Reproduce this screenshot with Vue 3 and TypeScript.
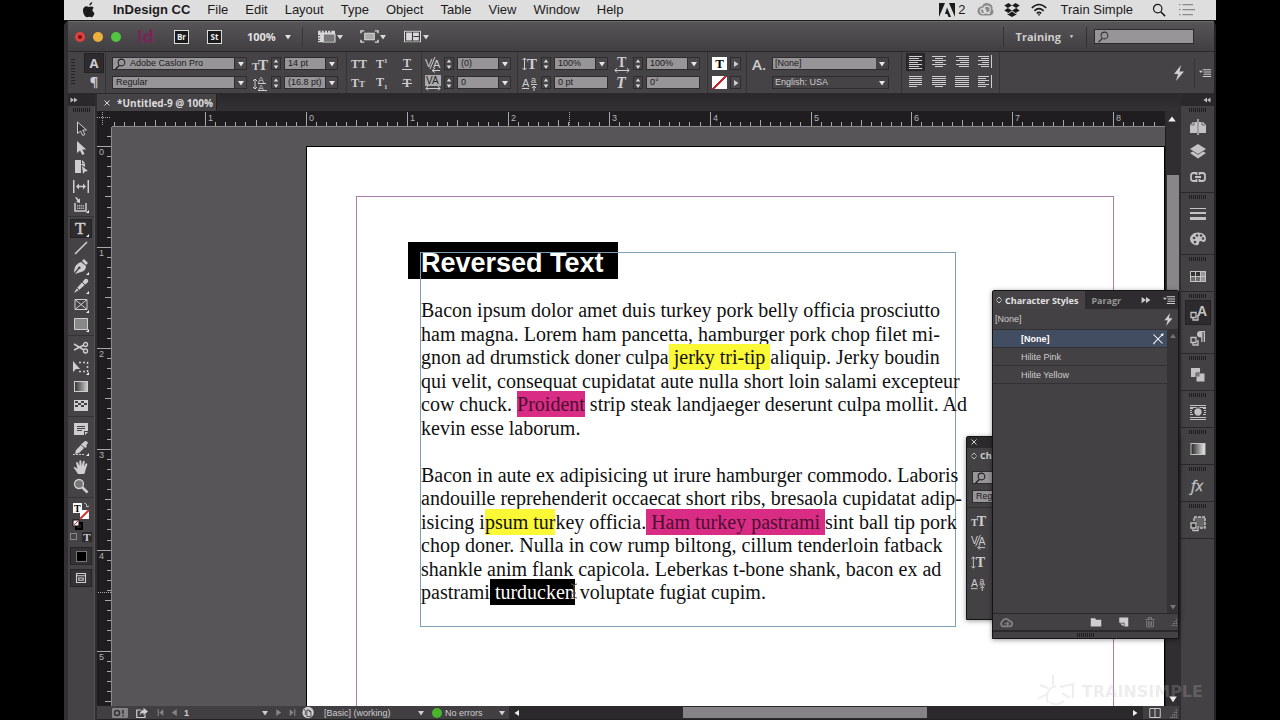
<script setup lang="ts">
import { ref } from 'vue'

interface Metric { icon: string; label: string; value: string; arrow: boolean }
interface Tick { pos: number; size: number; label: string }
interface Run { text: string; mark?: string }

const menus = ['File', 'Edit', 'Layout', 'Type', 'Object', 'Table', 'View', 'Window', 'Help']

const sizeMetrics: Metric[] = [
  { icon: 'fontSize', label: 'Font size', value: '14 pt', arrow: true },
  { icon: 'leading', label: 'Leading', value: '(16.8 pt)', arrow: true },
]
const kernMetrics: Metric[] = [
  { icon: 'kerning', label: 'Kerning', value: '(0)', arrow: true },
  { icon: 'tracking', label: 'Tracking', value: '0', arrow: true },
]
const vertMetrics: Metric[] = [
  { icon: 'vscale', label: 'Vertical scale', value: '100%', arrow: true },
  { icon: 'baseline', label: 'Baseline shift', value: '0 pt', arrow: false },
]
const horzMetrics: Metric[] = [
  { icon: 'hscale', label: 'Horizontal scale', value: '100%', arrow: true },
  { icon: 'skew', label: 'Skew', value: '0°', arrow: false },
]
const metricGroups = { size: sizeMetrics, kern: kernMetrics, vert: vertMetrics, horz: horzMetrics }

const caps = ['allCaps', 'superscript', 'underline', 'smallCaps', 'subscript', 'strike']
const aligns = ['alignLeft', 'alignCenter', 'alignRight', 'alignSpine', 'justLeft', 'justCenter', 'justAll', 'awaySpine']

const toolGroups = [
  ['select', 'direct', 'page', 'gap', 'collect'],
  ['type', 'line', 'pen', 'pencil', 'frame', 'rect'],
  ['scissors', 'transform', 'gradient', 'feather'],
  ['note', 'eyedropper', 'hand', 'zoom'],
]
const activeTool = ref('type')

const dockGroups = [
  ['pages', 'layers', 'links'],
  ['stroke', 'palette'],
  ['swatches'],
  ['charStyles', 'paraStyles'],
  ['pathfinder'],
  ['wrap'],
  ['gradientPanel'],
  ['effects'],
  ['objectStyles'],
]

const styles = ['[None]', 'Hilite Pink', 'Hilite Yellow']
const activeStyle = ref('[None]')

const lines: Run[][] = [
  [{ text: 'Bacon ipsum dolor amet duis turkey pork belly officia prosciutto' }],
  [{ text: 'ham magna. Lorem ham pancetta, hamburger pork chop filet mi-' }],
  [{ text: 'gnon ad drumstick doner culpa' }, { text: ' jerky tri-tip ', mark: 'yellow' }, { text: 'aliquip. Jerky boudin' }],
  [{ text: 'qui velit, consequat cupidatat aute nulla short loin salami excepteur' }],
  [{ text: 'cow chuck. ' }, { text: 'Proident', mark: 'pink' }, { text: ' strip steak landjaeger deserunt culpa mollit. Ad' }],
  [{ text: 'kevin esse laborum.' }],
  [{ text: '' }],
  [{ text: 'Bacon in aute ex adipisicing ut irure hamburger commodo. Laboris' }],
  [{ text: 'andouille reprehenderit occaecat short ribs, bresaola cupidatat adip-' }],
  [{ text: 'isicing i' }, { text: 'psum tur', mark: 'yellow' }, { text: 'key officia.' }, { text: ' Ham turkey pastrami ', mark: 'pink' }, { text: 'sint ball tip pork' }],
  [{ text: 'chop doner. Nulla in cow rump biltong, cillum tenderloin fatback' }],
  [{ text: 'shankle anim flank capicola. Leberkas t-bone shank, bacon ex ad' }],
  [{ text: 'pastrami' }, { text: ' turducken', mark: 'black' }, { text: ' voluptate fugiat cupim.' }],
]

const INCH = 100.9
function makeTicks(origin: number, from: number, to: number, major: number): Tick[] {
  const out: Tick[] = []
  for (let i = from; i <= to; i++) {
    const whole = i % 10 === 0
    out.push({
      pos: Math.round(origin + (i * INCH) / 10),
      size: whole ? major : i % 5 === 0 ? 6 : 4,
      label: whole ? String(Math.abs(i / 10)) : '',
    })
  }
  return out
}
const hTicks = makeTicks(194, -19, 84, 14)
const vTicks = makeTicks(19, -1, 57, 14)

const T = (t: string, x: number, y: number, s: number, extra = '') =>
  `<text x="${x}" y="${y}" font-size="${s}" ${extra}>${t}</text>`
const serif = 'font-family="Liberation Serif" font-weight="bold"'
const rows = (ys: number[][], extra = '') =>
  `<path fill="none" stroke="currentColor" d="${ys.map(([y, a, b]) => `M${a} ${y}.5H${b}`).join('')}"/>${extra}`
const corner = '<path d="M16 13v3h-3z" fill="#eee"/>'

const icons: Record<string, string> = {
  fontSize: T('T', 0, 14, 11, serif) + T('T', 6, 14, 15, serif),
  leading: T('A', 6, 8, 9) + T('A', 6, 16, 9) + '<path d="M3 4v9M1 6l2-2 2 2M1 12l2 2 2-2M6 8.500h8M6 15.500h9" fill="none" stroke="currentColor"/>',
  kerning: T('V', 0, 11, 11) + T('A', 8, 12, 11) + '<path d="M10 1L5 13M8 14.500h7M10 12l-3 2.500 3 2" fill="none" stroke="currentColor"/>',
  tracking: '<rect x="0" y="0" width="16" height="11" opacity=".75"/>' + T('VA', 1, 9, 10, 'style="fill:#222"') + '<path d="M1 13.500h14M3 11l-2 2.500 2 2M13 11l2 2.500-2 2" fill="none" stroke="currentColor"/>',
  vscale: T('T', 5, 13, 15, serif) + '<path d="M2.500 2v12M.5 4l2-2 2 2M.5 12l2 2 2-2" fill="none" stroke="currentColor"/>',
  hscale: T('T', 3, 11, 14, serif) + '<path d="M1 14.500h14M3 12l-2 2.500 2 2M13 12l2 2.500-2 2" fill="none" stroke="currentColor"/>',
  baseline: T('A', 0, 12, 11) + T('a', 9, 8, 9) + '<path d="M0 13.500h7M9 9.500h6M12 16v-5M10 13l2-2 2 2" fill="none" stroke="currentColor"/>',
  skew: T('T', 2, 13, 16, serif + ' font-style="italic"'),
  allCaps: T('TT', 0, 12, 12, serif),
  superscript: T('T', 1, 12, 12, serif) + T('1', 9, 7, 7, serif),
  underline: T('T', 4, 11, 12, serif) + '<path d="M3 13h10v1H3z"/>',
  smallCaps: T('T', 0, 12, 12, serif) + T('T', 8, 12, 9, serif),
  subscript: T('T', 1, 11, 12, serif) + T('1', 9, 14, 7, serif),
  strike: T('T', 4, 12, 12, serif) + '<path d="M3 8h10v1H3z"/>',
  alignLeft: rows([[2, 1, 14], [4, 1, 11], [6, 1, 14], [8, 1, 10], [10, 1, 14], [12, 1, 11], [14, 1, 14]]),
  alignCenter: rows([[2, 1, 15], [4, 4, 12], [6, 1, 15], [8, 4, 12], [10, 1, 15], [12, 4, 12]]),
  alignRight: rows([[2, 2, 15], [4, 5, 15], [6, 2, 15], [8, 6, 15], [10, 2, 15], [12, 5, 15]]),
  alignSpine: rows([[2, 1, 12], [4, 4, 12], [6, 1, 12], [8, 5, 12], [10, 1, 12], [12, 4, 12]], '<path d="M14 1h1v13h-1z"/>'),
  justLeft: rows([[2, 1, 14], [4, 1, 14], [6, 1, 14], [8, 1, 14], [10, 1, 14], [12, 1, 9]]),
  justCenter: rows([[2, 1, 15], [4, 1, 15], [6, 1, 15], [8, 1, 15], [10, 1, 15], [12, 4, 12]]),
  justAll: rows([[2, 1, 15], [4, 1, 15], [6, 1, 15], [8, 1, 15], [10, 1, 15], [12, 1, 15]]),
  awaySpine: rows([[2, 1, 12], [4, 1, 9], [6, 1, 12], [8, 1, 8], [10, 1, 12], [12, 1, 9]], '<path d="M14 1h1v13h-1z"/>'),

  select: '<path d="M4.500 1v11.500l3-2.500 2.300 4.500 2-1L9.700 9h3.800z" fill="#333" stroke="currentColor"/>',
  direct: '<path d="M4 1v12l3-2.500 2.300 4.500 2.200-1.100L9.300 9.500h4z"/>',
  page: '<path d="M2 1h6v4h4v3L8 5.500V14H2zM9 1l3.500 3.500H9zM9 7l6 5-3 .5L10 15z"/>',
  gap: '<path d="M0 2h1.500v13H0zM14.500 2H16v13h-1.500zM3 8.500l3-3v2.300h4V5.500l3 3-3 3V9.200H6v2.300z"/>',
  collect: '<path d="M2 6v8h11V6" fill="none" stroke="currentColor" stroke-width="1.500"/><path d="M4 8h7v1.500H4zM4 10.500h7V12H4z" opacity=".8"/><path d="M5.500 7.500v5M7.500 7.500v5M9.500 7.500v5" stroke="#444" stroke-width=".6"/><path d="M2 0l2 .5 1.500 2L7 1.500V6L3 5l1.300-1z"/>' + corner,
  type: T('T', 2, 13, 17, 'font-family="Liberation Serif" stroke="currentColor" stroke-width=".5"') + corner,
  line: '<path d="M2 14L14 2" stroke="currentColor" stroke-width="1.600"/>',
  pen: '<path d="M11 0l4 4-2 2-4-4zM8 3l5 4q0 5-5 6l-6 2 4-5a1.300 1.300 0 10-1-1L1 14Q1 5 8 3z"/>' + corner,
  pencil: '<path d="M12 1q2-1 3 1t-1 3L6 12l-5 3 3-5z"/><path d="M9 4l3.500 3.500M4 10l2 2" stroke="#444"/>' + corner,
  frame: '<path d="M2 2.500h12v10H2zM2 2.500l12 10M14 2.500l-12 10" fill="none" stroke="currentColor"/>' + corner,
  rect: '<path d="M1.500 2.500h13v11h-13z" fill="#888" stroke="currentColor"/>' + corner,
  scissors: '<path d="M1 4l10 6M1 10l10-5" stroke="currentColor" stroke-width="1.500"/><circle cx="12.500" cy="4.500" r="2" fill="none" stroke="currentColor" stroke-width="1.300"/><circle cx="12.500" cy="11" r="2" fill="none" stroke="currentColor" stroke-width="1.300"/>',
  transform: '<path d="M0 2v11l3-3h4z"/><path d="M6 3.500h8.500v9H5" fill="none" stroke="currentColor" stroke-width="1.500" stroke-dasharray="2 2"/>' + corner,
  gradient: '<defs><linearGradient id="g1"><stop offset="0" stop-color="#333"/><stop offset="1" stop-color="#ccc"/></linearGradient></defs><rect x="1.500" y="3.500" width="13" height="10" fill="url(#g1)" stroke="currentColor"/>',
  feather: '<path d="M1 3h14v11H1z"/><path d="M2 4h3v2H2zM8 4h3v2H8zM5 6h3v2H5zM11 6h3v2h-3zM2 8h3v2H2zM8 8h3v2H8z" fill="#444"/>',
  note: '<path d="M1 2h14v8h-4v4H1zM12 11h3l-3 3z"/><path d="M4 5.500h8M4 7.500h8M4 9.500h5" stroke="#444"/>',
  eyedropper: '<path d="M10 3q2-3 4-1.500t-1 4l1 1L12.500 8 8 4.500 9.500 3zM8 5l3 3-5 5-4 1 1-4z"/><path d="M0 14.500h12" stroke="currentColor" stroke-dasharray="2 1"/>' + corner,
  hand: '<path d="M5 15Q3 12 .6 8.600q1-1.300 2.600.2L4.500 10 3 3.500q1.200-1.200 2 .2L6.500 7 6.300 2q1-1.400 2 0L8.700 7l1.200-4.700q1.200-1 1.900.3L11 7.500l1.800-3q1.400-.6 1.600.8L12.500 11q-.5 3-1.500 4z"/>',
  zoom: '<circle cx="6" cy="6" r="4.500" fill="#777" stroke="currentColor" stroke-width="1.300"/><path d="M9 9l5.500 5.500" stroke="currentColor" stroke-width="2.500"/>',

  pages: '<path d="M0 6l3-3h4v11H0zM16 6l-3-3H9v11h7z"/><path d="M8 0v16" stroke="#fff" stroke-width="1"/><path d="M1 6h3V3M15 6h-3V3" stroke="#666" fill="none"/>',
  layers: '<path d="M8 0l8 5-8 5-8-5z"/><path d="M0 9l3-1.500 5 3.200 5-3.200L16 9l-8 5.500z"/>',
  links: '<path d="M6.500 6V4H3.500Q1 4 1 6.500v3Q1 12 3.500 12h3v-2M9.500 6V4h3Q15 4 15 6.500v3q0 2.500-2.500 2.500h-3v-2M5 8h6" fill="none" stroke="currentColor" stroke-width="1.800"/>',
  stroke: '<path d="M0 2h16v1H0zM0 6h16v2H0zM0 11h16v3H0z"/>',
  palette: '<path d="M8 1.500c5 0 8 3 8 6s-2 4-4 3-3 0-3 1.500-1 3-4 2-5-3-5-6 3-6.500 8-6.500z"/><g fill="#444"><circle cx="4" cy="7" r="1.300"/><circle cx="7" cy="4.500" r="1.300"/><circle cx="11" cy="4.500" r="1.300"/><circle cx="13" cy="7.500" r="1.300"/><circle cx="5" cy="11" r="1.300"/></g>',
  swatches: '<path d="M0 3h16v11H0z"/><g fill="#333"><path d="M1 4h4v4H1zM6 4h4v4H6z"/><path d="M1 9h4v4H1zM6 9h4v4H6z" opacity=".6"/><path d="M11 4h4v4h-4zM11 9h4v4h-4z" opacity=".3"/></g>',
  charStyles: T('A', 7, 11, 14, 'font-family="Liberation Sans" font-weight="bold"') + '<path d="M1 7.500h5v5H1z M3 13v2h5v-4H7" fill="none" stroke="currentColor" stroke-width="1.300"/>',
  paraStyles: '<path d="M15 1v11h-1.300V2H12.500v10h-1.300V7.500Q7 7.500 7 4.300T10.500 1z"/><path d="M1 7.500h5v5H1z M3 13v2h5v-4H7" fill="none" stroke="currentColor" stroke-width="1.300"/>',
  pathfinder: '<path d="M1 1h9v9H1z"/><path d="M6 6h9v9H6z" stroke="#444"/><path d="M6.500 6.500h3v3h-3z" fill="#777"/>',
  wrap: rows([[1, 0, 16], [4, 0, 3], [4, 13, 16], [6, 0, 2], [6, 14, 16], [8, 0, 2], [8, 14, 16], [10, 0, 3], [10, 13, 16], [13, 0, 16], [15, 0, 16]], '<path d="M0 3.500h16" stroke="currentColor"/><circle cx="8" cy="8" r="4.200" stroke="#333"/>'),
  gradientPanel: '<defs><linearGradient id="g2"><stop offset="0" stop-color="#222"/><stop offset="1" stop-color="#eee"/></linearGradient></defs><rect x="1" y="2.500" width="14" height="11" fill="url(#g2)" stroke="currentColor"/>',
  effects: T('fx', 1, 13, 15, 'font-family="Open Sans" font-style="italic" stroke="currentColor" stroke-width=".3"'),
  objectStyles: '<path d="M4 2h11v11H9" fill="#666"/><path d="M4 6V2h11v11H9" fill="none" stroke="currentColor" stroke-width="1.500" stroke-dasharray="3 1"/><path d="M1 8h5v5H1z M3 14v1.500h5V11" fill="#333" stroke="currentColor" stroke-width="1.300"/>',

  search: '<circle cx="10" cy="6" r="4.500" fill="none" stroke="currentColor" stroke-width="1.400"/><path d="M7 10l-5 5" stroke="currentColor" stroke-width="1.600"/>',
  bolt: '<path d="M10 0L3 9h4l-2 7 8-9.500H8.500z"/>',
  menu: '<path d="M0 5h5L2.500 8zM5 3h11v1.200H5zM6 6h10v1.200H6zM6 9h10v1.200H6zM5 12h11v1.200H5z"/>',
  down: '<path d="M2 4h12L8 13z"/>',
  right: '<path d="M4 2v12l9-6z"/>',
  left: '<path d="M12 2v12L3 8z"/>',
  up: '<path d="M2 12h12L8 4z"/>',
  forward: '<path d="M1 3v10l7-5zM8 3v10l7-5z"/>',
  back: '<path d="M8 3v10L1 8zM15 3v10L8 8z"/>',
  first: '<path d="M3 2h2v12H3zM13 2v12L6 8z"/>',
  last: '<path d="M11 2h2v12h-2zM3 2v12l7-6z"/>',
  updown: '<path d="M3 7l5-5 5 5M3 9l5 5 5-5" fill="none" stroke="currentColor" stroke-width="1.700"/>',
  close: '<path d="M3 3l10 10M13 3L3 13" stroke="currentColor" stroke-width="2"/>',
  viewOptions: '<path d="M0 1h16v4H5v10H0z"/><path d="M5 5h11v10H5z" fill="#777" stroke="currentColor"/><path d="M3 1v2M6 1v2M9 1v2M12 1v2M0 7h2M0 10h2M0 13h2" stroke="#333"/>',
  screenMode: '<path d="M3.500 4h9v8h-9z" fill="#aaa" stroke="currentColor"/><path d="M0 4V1h3M13 1h3v3M16 12v3h-3M3 15H0v-3" fill="none" stroke="currentColor" stroke-width="1.400"/>',
  arrange: '<path d="M0 1h16v14H0z"/><path d="M8 2v12M9 8h6M1.500 2.500h13v11h-13z" fill="none" stroke="#333"/>',
  cloud: '<path d="M4 13a3.500 3.500 0 010-6 4.500 4.500 0 018 0 3 3 0 010 6z" fill="none" stroke="currentColor" stroke-width="2"/><path d="M6 10h5M9 8l2 2-2 2" fill="none" stroke="currentColor" stroke-width="1.300"/>',
  folder: '<path d="M1 3h6l1 2h7v9H1z"/>',
  newItem: '<path d="M3 2h12v12h-5V9H3z"/><path d="M4 10h5v4z"/>',
  trash: '<path d="M2 4.500h12M6 4V2h4v2M3.500 6v8.500h9V6M6 7v6M8 7v6M10 7v6" fill="none" stroke="currentColor" stroke-width="1.200"/>',
  resize: '<path d="M14 2h2v2h-2zM11 6h2v2h-2zM14 6h2v2h-2zM8 10h2v2H8zM11 10h2v2h-2zM14 10h2v2h-2zM5 14h2v2H5zM8 14h2v2H8zM11 14h2v2h-2zM14 14h2v2h-2z"/>',
  noPen: '<path d="M2 2l12 12M14 2L3 13l-1 2" stroke="currentColor" stroke-width="1.400"/><path d="M12 2l3-1-1 3z" stroke="currentColor"/>',
  preflight: '<rect x="0" y="3" width="16" height="10" rx="1"/><circle cx="5" cy="8" r="2.500" fill="none" stroke="#333" stroke-width="1.500"/><path d="M11 5v4M11 10v1.500" stroke="#333" stroke-width="1.500"/>',
  share: '<path d="M7 4H1v10h11v-4" fill="none" stroke="currentColor" stroke-width="1.600"/><path d="M10 1l6 5-6 5V8Q6 8 5 11q0-6 5-7z"/>',
  bridge: '<circle cx="7.500" cy="8" r="7"/><path d="M6 5v8h5V7L9 5zM9 5v2h2M3 4q2 2 1 7" fill="none" stroke="#333"/>',
  spread: '<path d="M1 2h14v12H1zM8 2v12" fill="none" stroke="currentColor" stroke-width="1.300"/>',
  apple: '<path d="M11.200 0q.1 2.700-2.800 3.500Q8.300 1 11.200 0zM13.200 12.500q-1.700 3.300-3.300 2.600-1.600-.8-3 0Q4 16 2.200 10.500 1.200 5 5 4.300q1.200-.1 2.800.7 2.700-1.500 5 .8-3 2.200.4 5z"/>',
  adobe: '<path d="M0 1h6L0 15zM10 1h6v14zM8 5.500L12 15H9.500L8.300 12H6z"/>',
  creative: '<path d="M5 13.500a4.500 4.500 0 010-9 5.500 5.500 0 0110.500 3 3.500 3.500 0 01-2.500 6z"/><g fill="none" stroke="#ddd" stroke-width="1.200"><circle cx="6" cy="9" r="2.600"/><circle cx="10" cy="7.500" r="3.300"/><path d="M6 7l5 4.500h2"/></g>',
  dropbox: '<path d="M4.500 1L8 3.500 3.800 6 .3 3.500zM11.500 1l4.200 2.500L12.200 6 8 3.500zM.3 8.500L3.800 6 8 8.500 4.500 11zM15.700 8.500L12.200 6 8 8.500l3.500 2.500zM8 9.500l3.500 2.500 1-.5v1L8 15l-4.500-2.500v-1l1 .5z"/>',
  wifi: '<path d="M.8 6q7.200-7 14.400 0M3.400 8.800q4.600-4.300 9.200 0M5.800 11.300q2.200-2 4.400 0" fill="none" stroke="currentColor" stroke-width="1.600"/><path d="M6.600 12.300h2.800L8 14z"/>',
  spotlight: '<circle cx="6.500" cy="6.500" r="4.800" fill="none" stroke="currentColor" stroke-width="1.400"/><path d="M10 10l5 5" stroke="currentColor" stroke-width="1.800"/>',
  list: '<path d="M0 2h1.500v1.300H0zM0 7h1.500v1.300H0zM0 12h1.500v1.300H0zM3.500 2H14v1.300H3.500zM3.500 7H16v1.300H3.500zM3.500 12H14v1.300H3.500z"/>',
}
</script>

<template>
  <div class="screen">
    <div class="desktop">
      <header class="menubar">
        <svg class="i16" viewBox="0 0 16 16" v-html="icons.apple" />
        <nav>
          <a class="appname" href="#">InDesign CC</a>
          <a v-for="m in menus" :key="m" href="#">{{ m }}</a>
        </nav>
        <div class="tray">
          <svg class="i16" viewBox="0 0 16 16" v-html="icons.adobe" /><span class="count">2</span>
          <svg class="i16 grey creative" viewBox="0 0 16 16" v-html="icons.creative" />
          <svg class="i16" viewBox="0 0 16 16" v-html="icons.dropbox" />
          <svg class="i16 wifi" viewBox="0 0 16 16" v-html="icons.wifi" />
          <span class="user">Train Simple</span>
          <svg class="i14" viewBox="0 0 16 16" v-html="icons.spotlight" />
          <svg class="i16 grey list" viewBox="0 0 16 16" v-html="icons.list" />
        </div>
      </header>

      <div class="window">
        <div class="appbar">
          <div class="lights"><i class="red" /><i class="amber" /><i class="green" /></div>
          <span class="id">Id</span>
          <button class="chip">Br</button>
          <button class="chip">St</button>
          <button class="zoomlevel">100% <svg class="i8" viewBox="0 0 16 16" v-html="icons.down" /></button>
          <div class="views">
            <button v-for="v in ['viewOptions', 'screenMode', 'arrange']" :key="v" :aria-label="v">
              <svg class="i17" viewBox="0 0 16 16" preserveAspectRatio="none" v-html="icons[v]" /><svg class="i8" viewBox="0 0 16 16" v-html="icons.down" />
            </button>
          </div>
          <button class="workspace">Training <svg class="i5" viewBox="0 0 16 16" v-html="icons.down" /></button>
          <label class="searchbox">
            <svg class="i12" viewBox="0 0 16 16" v-html="icons.search" />
            <input type="search" aria-label="Search help">
          </label>
        </div>

        <div class="control">
          <div class="modes">
            <span class="vgrip" />
            <button class="on">A</button>
            <button>¶</button>
          </div>
          <div class="cgroup fonts">
            <div class="pair">
              <div class="combo">
                <svg class="i12" viewBox="0 0 16 16" v-html="icons.search" />
                <input value="Adobe Caslon Pro" aria-label="Font family">
                <button aria-label="Show fonts"><svg class="i8" viewBox="0 0 16 16" v-html="icons.down" /></button>
              </div>
              <div class="combo">
                <input value="Regular" aria-label="Font style">
                <button aria-label="Show styles"><svg class="i8" viewBox="0 0 16 16" v-html="icons.down" /></button>
              </div>
            </div>
          </div>
          <template v-for="(ms, key) in metricGroups" :key="key">
            <div class="pair metrics" :class="key">
              <div v-for="m in ms" :key="m.label" class="metric">
                <svg class="i16" viewBox="0 0 16 16" v-html="icons[m.icon]" />
                <span class="stepper">
                  <button :aria-label="m.label + ' up'"><svg class="i6" viewBox="0 0 16 16" v-html="icons.up" /></button>
                  <button :aria-label="m.label + ' down'"><svg class="i6" viewBox="0 0 16 16" v-html="icons.down" /></button>
                </span>
                <span class="combo">
                  <input :value="m.value" :aria-label="m.label">
                  <button v-if="m.arrow" :aria-label="m.label + ' values'"><svg class="i8" viewBox="0 0 16 16" v-html="icons.down" /></button>
                </span>
              </div>
            </div>
            <div v-if="key === 'size'" class="cgroup caps">
              <button v-for="c in caps" :key="c" :aria-label="c"><svg class="i16" viewBox="0 0 16 16" v-html="icons[c]" /></button>
            </div>
          </template>
          <div class="cgroup fills">
            <span class="swatch">T</span><button aria-label="Fill"><svg class="i8" viewBox="0 0 16 16" v-html="icons.right" /></button>
            <span class="swatch none" /><button aria-label="Stroke"><svg class="i8" viewBox="0 0 16 16" v-html="icons.right" /></button>
          </div>
          <div class="cgroup lang">
            <span class="bigA">A.</span>
            <div class="pair">
              <div class="pick light"><select aria-label="Character style"><option>[None]</option></select><svg class="i8" viewBox="0 0 16 16" v-html="icons.down" /></div>
              <div class="pick"><select aria-label="Language"><option>English: USA</option></select><svg class="i8" viewBox="0 0 16 16" v-html="icons.down" /></div>
            </div>
          </div>
          <div class="cgroup aligns">
            <button v-for="a in aligns" :key="a" :class="{ on: a === 'alignLeft' }" :aria-label="a"><svg class="i16" viewBox="0 0 16 16" v-html="icons[a]" /></button>
          </div>
          <div class="cgroup rest">
            <button aria-label="Quick apply"><svg class="i16" viewBox="0 0 16 16" v-html="icons.bolt" /></button>
            <button class="flyout" aria-label="Panel menu"><svg class="i12" viewBox="0 0 16 16" v-html="icons.menu" /></button>
          </div>
        </div>

        <div class="work">
          <aside class="tools">
            <div class="strip"><svg class="i8" viewBox="0 0 16 16" v-html="icons.forward" /></div>
            <div class="toolbody">
              <span class="grip" />
              <div v-for="(g, n) in toolGroups" :key="n" class="tgroup">
                <button v-for="t in g" :key="t" :class="{ on: t === activeTool }" :aria-label="t" @click="activeTool = t">
                  <svg class="i16" viewBox="0 0 16 16" v-html="icons[t]" />
                </button>
              </div>
              <div class="tgroup colour">
                <svg class="paint" viewBox="0 0 18 28">
                  <rect x="8" y="8" width="9" height="9" fill="#fff" /><path d="M8 17l9-9" stroke="#c33" stroke-width="2" />
                  <rect x="1" y="1" width="9" height="10" fill="#fff" />
                  <text x="2" y="10" font-size="10" font-weight="bold" font-family="Liberation Serif" style="fill: #000">T</text>
                  <path d="M12 1q3 0 3 4M14 4l1 1 2-1" fill="none" stroke="#bbb" />
                  <rect x="4" y="21" width="6" height="6" fill="#222" stroke="#000" stroke-width="2" />
                  <rect x="1" y="18" width="6" height="6" fill="#eee" stroke="#111" /><path d="M1 24l6-6" stroke="#c33" />
                </svg>
                <div class="applyto"><i /><b>T</b></div>
                <button class="box" aria-label="Apply color"><i /></button>
                <button class="box" aria-label="Screen mode">
                  <svg class="i12" viewBox="0 0 16 16"><path d="M2 2h12v12H2zM2 5h12M5 8h6v3H5z" fill="none" stroke="currentColor" stroke-width="1.500" /></svg>
                </button>
              </div>
            </div>
          </aside>

          <main class="doc">
            <div class="tabs">
              <button class="tab"><svg class="i8" viewBox="0 0 16 16" v-html="icons.close" />*Untitled-9 @ 100%</button>
            </div>
            <div class="view">
              <svg class="origin" viewBox="0 0 15 16"><path d="M5.500 1v14M0 6.500h14" stroke="#aaa" stroke-dasharray="1 1" /></svg>
              <svg class="hruler">
                <g v-for="t in hTicks" :key="t.pos">
                  <line :x1="t.pos" :x2="t.pos" :y1="15 - t.size" y2="15" />
                  <text v-if="t.label" :x="t.pos + 3" y="10">{{ t.label }}</text>
                </g>
                <line class="pointer" x1="457" x2="457" y1="1" y2="15" />
              </svg>
              <div class="upcell"><svg class="i10" viewBox="0 0 16 16" v-html="icons.up" /></div>
              <svg class="vruler">
                <g v-for="t in vTicks" :key="t.pos">
                  <line :y1="t.pos" :y2="t.pos" :x1="14 - t.size" x2="14" />
                  <text v-if="t.label" x="2" :y="t.pos + 9">{{ t.label }}</text>
                </g>
                <line class="pointer" y1="465" y2="465" x1="1" x2="14" />
              </svg>
              <div class="canvas">
                <div class="page">
                  <div class="margins" />
                  <h1 class="reversed">Reversed Text</h1>
                  <div class="frame">
                    <div class="copy">
                      <div v-for="(line, n) in lines" :key="n" class="line">
                        <span v-for="(r, k) in line" :key="k" :class="r.mark">{{ r.text }}</span>
                      </div>
                    </div>
                  </div>
                  <svg class="ibeam" viewBox="0 0 8 16"><path d="M1 1q3 0 3 2v10q0 2-3 2M7 1q-3 0-3 2M4 13q0 2 3 2M2 10h4" fill="none" stroke="#555" /></svg>
                </div>
              </div>
              <div class="vscroll"><i /><svg class="i10" viewBox="0 0 16 16" v-html="icons.down" /></div>
            </div>
            <footer class="status">
              <div class="pagenav">
                <svg class="i16 dim" viewBox="0 0 16 16" v-html="icons.preflight" />
                <svg class="i12 share" viewBox="0 0 16 16" v-html="icons.share" />
                <button class="dim" aria-label="First page"><svg class="i9" viewBox="0 0 16 16" v-html="icons.first" /></button>
                <button class="dim" aria-label="Previous page"><svg class="i9" viewBox="0 0 16 16" v-html="icons.left" /></button>
                <input value="1" aria-label="Page">
                <svg class="i8" viewBox="0 0 16 16" v-html="icons.down" />
                <button class="dim" aria-label="Next page"><svg class="i9" viewBox="0 0 16 16" v-html="icons.right" /></button>
                <button class="dim" aria-label="Last page"><svg class="i9" viewBox="0 0 16 16" v-html="icons.last" /></button>
                <svg class="i13" viewBox="0 0 16 16" v-html="icons.bridge" />
              </div>
              <button class="profile">[Basic] (working) <svg class="i8" viewBox="0 0 16 16" v-html="icons.down" /></button>
              <button class="errors"><i />No errors <svg class="i8" viewBox="0 0 16 16" v-html="icons.down" /></button>
              <div class="hscroll">
                <svg class="i8" viewBox="0 0 16 16" v-html="icons.left" />
                <div class="track"><i /></div>
                <svg class="i8" viewBox="0 0 16 16" v-html="icons.right" />
              </div>
              <svg class="spread" viewBox="0 0 16 16" v-html="icons.spread" />
              <svg class="i10 dim" viewBox="0 0 16 16" v-html="icons.resize" />
            </footer>

            <section class="floating character">
              <div class="cclose"><svg class="i8" viewBox="0 0 16 16" v-html="icons.close" /></div>
              <div class="ctitle"><svg class="i8" viewBox="0 0 16 16" v-html="icons.updown" />Character</div>
              <div class="cfields">
                <div class="combo"><svg class="i12" viewBox="0 0 16 16" v-html="icons.search" /><input aria-label="Family"></div>
                <div class="combo"><input value="Regular" aria-label="Style"></div>
              </div>
              <div class="cicons">
                <svg v-for="c in ['fontSize', 'kerning', 'vscale', 'baseline']" :key="c" class="i15" viewBox="0 0 16 16" v-html="icons[c]" />
              </div>
            </section>

            <section class="floating charstyles">
              <div class="ptabs">
                <button class="ptab on"><svg class="i8" viewBox="0 0 16 16" v-html="icons.updown" />Character Styles</button>
                <button class="ptab">Paragr</button>
                <svg class="i10" viewBox="0 0 16 16" v-html="icons.forward" />
                <svg class="i12" viewBox="0 0 16 16" v-html="icons.menu" />
              </div>
              <div class="applied"><span>[None]</span><svg class="i13" viewBox="0 0 16 16" v-html="icons.bolt" /></div>
              <div class="listing">
                <ul>
                  <li v-for="s in styles" :key="s">
                    <button :class="{ on: s === activeStyle }" @click="activeStyle = s">
                      {{ s }}<svg v-if="s === '[None]'" class="i12" viewBox="0 0 16 16" v-html="icons.noPen" />
                    </button>
                  </li>
                </ul>
                <div class="pscroll">
                  <svg class="i8" viewBox="0 0 16 16" v-html="icons.up" /><svg class="i8" viewBox="0 0 16 16" v-html="icons.down" />
                </div>
              </div>
              <div class="pfoot">
                <svg class="i14 dim" viewBox="0 0 16 16" v-html="icons.cloud" />
                <button aria-label="New group"><svg class="i12" viewBox="0 0 16 16" v-html="icons.folder" /></button>
                <button aria-label="New style"><svg class="i12" viewBox="0 0 16 16" v-html="icons.newItem" /></button>
                <button class="dim" aria-label="Delete"><svg class="i12" viewBox="0 0 16 16" v-html="icons.trash" /></button>
                <svg class="i8 dim" viewBox="0 0 16 16" v-html="icons.resize" />
              </div>
              <div class="pbase"><span class="grip" /></div>
            </section>
          </main>

          <aside class="dock">
            <div class="strip"><svg class="i8" viewBox="0 0 16 16" v-html="icons.back" /></div>
            <div v-for="(g, n) in dockGroups" :key="n" class="dgroup">
              <span class="grip" />
              <button v-for="d in g" :key="d" :class="{ on: d === 'charStyles' }" :aria-label="d">
                <svg class="i16" viewBox="0 0 16 16" v-html="icons[d]" />
              </button>
            </div>
          </aside>
        </div>
      </div>
      <div class="watermark">
        <svg viewBox="0 0 40 36"><path d="M17 2v10M4 12l8 3M2 26l9-5M12 30q-4-14 8-17M14 29q6 5 14-1M24 14l13-3v14M26 20l8 5" fill="none" stroke="currentColor" stroke-width="2" /></svg>
        TRAINSIMPLE
      </div>
    </div>
  </div>
</template>

<style>
body { background: #000; }
</style>

<style scoped>
* { box-sizing: border-box; }
.screen { height: 100vh; min-height: 480px; background: #000; display: flex; justify-content: center; font-family: "Liberation Sans", sans-serif; overflow: hidden; }
.desktop { width: 90%; position: relative; display: flex; flex-direction: column; }
svg { fill: currentColor; flex: none; display: block; overflow: visible; }
button, input, select { font: inherit; color: inherit; background: none; border: 0; padding: 0; margin: 0; border-radius: 0; outline: 0; min-width: 0; }
button { display: flex; align-items: center; justify-content: center; white-space: nowrap; }
a { color: inherit; text-decoration: none; }
.i5 { width: 5px; height: 5px; } .i6 { width: 6px; height: 6px; } .i8 { width: 8px; height: 8px; }
.i9 { width: 9px; height: 9px; } .i10 { width: 10px; height: 10px; } .i12 { width: 12px; height: 12px; }
.i13 { width: 13px; height: 13px; } .i14 { width: 14px; height: 14px; } .i15 { width: 15px; height: 15px; }
.i16 { width: 16px; height: 16px; } .i17 { width: 17px; height: 13px; }
.dim { color: #858385; }
.grey { color: #8b8a8b; }

.menubar { height: 21px; flex: none; background: #dfdedf; color: #1b1b1b; font-size: 13px; display: flex; align-items: center; padding: 0 21px 1px 17px; border-bottom: 1px solid #1a1a1a; }
.menubar nav { display: flex; gap: 17px; margin-left: 16px; white-space: nowrap; }
.appname { font-weight: bold; }
.tray { margin-left: auto; display: flex; align-items: center; gap: 10px; }
.count { margin-left: -7px; }
.wifi { width: 18px; }
.list { margin-left: 3px; }
.creative { width: 18px; }
.user { margin: 0 9px 0 3px; white-space: nowrap; }

.window { flex: 1; min-height: 0; display: flex; flex-direction: column; background: #434143; color: #cfcdcf; border-radius: 5px 5px 0 0; border-left: 4px solid #323032; border-right: 2px solid #252325; }
.appbar { height: 31px; flex: none; display: flex; align-items: center; background: linear-gradient(#565456, #413f41); border-bottom: 1px solid #2a282a; border-top: 1px solid #6a686a; padding: 0 20px 0 7px; font-family: "Open Sans", sans-serif; }
.lights { display: flex; gap: 8px; }
.lights i { width: 10px; height: 10px; border-radius: 50%; }
.red { background: radial-gradient(#7a1010 20%, #e04040 35%); } .amber { background: #e9b03c; } .green { background: #52c640; }
.id { margin-left: 16px; width: 18px; font-size: 17px; font-weight: bold; line-height: 20px; color: #7a2459; }
.chip { width: 15px; height: 14px; margin-left: 18px; border: 1px solid #ddd; background: #1c1b1c; color: #eee; font-size: 8px; font-weight: bold; }
.id + .chip { margin-left: 19px; }
.zoomlevel { margin-left: 25px; gap: 8px; font-size: 11px; font-weight: bold; color: #e2e0e2; }
.views { display: flex; gap: 17px; border-left: 1px solid #383638; margin-left: 10px; padding-left: 15px; height: 20px; }
.views button { gap: 1px; color: #dad8da; }
.workspace { margin-left: auto; border-left: 1px solid #333133; border-right: 1px solid #333133; height: 20px; padding: 0 12px 0 12px; gap: 8px; font-size: 11px; font-weight: bold; }
.searchbox { margin-left: 7px; width: 100px; height: 15px; background: #979597; border: 1px solid #2c2a2c; display: flex; align-items: center; color: #333; padding-left: 2px; }
.searchbox input { width: 100%; font-size: 9px; }

.control { height: 42px; flex: none; display: flex; background: #454345; border-bottom: 1px solid #2b292b; font-size: 9px; }
.modes { width: 37px; display: grid; grid-template-columns: 7px 20px; grid-template-rows: 20px 18px; column-gap: 6px; padding-left: 3px; }
.vgrip { grid-row: 1 / 3; width: 4px; height: 27px; align-self: center; background: repeating-linear-gradient(#222 0 1px, transparent 1px 3px); }
.modes button { font: bold 13px "Open Sans", sans-serif; }
.on { background: #2d2b2d; box-shadow: inset 0 0 0 1px #242224; }
.cgroup, .kern, .vert { border-left: 1px solid #353335; }
.control > div { padding-top: 5px; }
.control > .modes { padding-top: 1px; }
.pair { display: flex; flex-direction: column; gap: 6px; }
.fonts { padding: 0 5px 0 6px; }
.fonts .pair { width: 135px; }
.combo { height: 13px; flex: 1; display: flex; align-items: center; background: #979597; border: 1px solid #2e2c2e; color: #1d1b1d; min-width: 0; }
.pair > .combo { flex: none; }
.combo input { flex: 1; width: 10px; height: 11px; padding-left: 3px; font-size: 9px; line-height: 11px; }
.combo > svg { margin: 0 1px; }
.combo button { width: 12px; height: 11px; background: #4a484a; color: #e6e4e6; border-left: 1px solid #2e2c2e; }
.metric { display: flex; gap: 3px; height: 13px; align-items: center; width: 86px; }
.size { padding-right: 8px; box-sizing: content-box; }
.kern { padding-left: 3px; padding-right: 6px; }
.vert { padding-left: 4px; padding-right: 6px; }
.horz { padding-right: 7px; }
.stepper { width: 10px; height: 13px; display: grid; border: 1px solid #2e2c2e; }
.stepper button { color: #dddbdd; height: 6px; overflow: hidden; }
.caps { display: grid; grid-template-columns: repeat(3, 24px); grid-template-rows: 13px 13px; row-gap: 6px; padding-right: 2px; }
.fills { display: grid; grid-template-columns: 15px 11px; grid-template-rows: 13px 13px; gap: 6px 3px; padding: 0 5px 0 4px; }
.fills button { border: 1px solid #2e2c2e; background: #4a484a; }
.swatch { background: #fff; color: #000; font: bold 13px/13px "Liberation Serif", serif; text-align: center; }
.none { background: linear-gradient(135deg, #fff 46%, #c1272d 46% 54%, #fff 54%); }
.lang { display: flex; padding: 0 12px 0 5px; }
.lang .pair { width: 117px; }
.bigA { width: 20px; font: 600 15px/14px "Open Sans", sans-serif; }
.pick { height: 13px; display: flex; align-items: center; border: 1px solid #2e2c2e; }
.pick select { flex: 1; appearance: none; height: 11px; padding-left: 2px; font-size: 9px; line-height: 11px; }
.pick svg { margin: 0 2px; color: #e6e4e6; }
.light select { background: #979597; color: #1d1b1d; }
.aligns { display: grid; grid-template-columns: repeat(4, 23px); grid-template-rows: 18px 18px; row-gap: 2px; padding: 0 3px 0 2px; }
.control > .aligns { padding-top: 1px; }
.aligns button { width: 19px; margin: 0 2px; }
.rest { flex: 1; display: flex; justify-content: flex-end; align-items: center; }
.control > .rest { padding: 0 3px 0 0; }
.flyout { border-left: 1px solid #353335; margin-left: 7px; padding-left: 4px; height: 30px; }

.work { flex: 1; min-height: 0; display: flex; background: #2f2d2f; }
.strip { height: 12px; background: #2a282a; display: flex; align-items: center; color: #bbb; flex: none; }
.tools { width: 27px; display: flex; flex-direction: column; }
.tools .strip { padding-left: 2px; }
.toolbody { flex: 1; background: #454345; border-right: 1px solid #555355; }
.grip { display: block; width: 17px; height: 4px; margin: 0 auto; background: repeating-linear-gradient(90deg, #1f1d1f 0 1px, transparent 1px 2px); }
.toolbody > .grip { margin-top: 2px; margin-bottom: 7px; }
.tgroup { padding-bottom: 2px; margin-bottom: 2px; border-bottom: 1px solid #343234; }
.tgroup button { width: 22px; height: 19px; margin: 0 auto; }
.tgroup.colour { border: 0; }
.paint { width: 18px; height: 28px; margin: 4px auto 0; }
.applyto { display: flex; justify-content: center; align-items: center; gap: 5px; height: 13px; }
.applyto i { width: 7px; height: 7px; border: 1px solid #888; }
.applyto b { font: bold 11px/10px "Liberation Serif", serif; background: #2a282a; padding: 0 1px; }
.tgroup .box { background: #343234; border: 1px solid #262426; height: 18px; margin-top: 4px; }
.box i { width: 11px; height: 11px; background: #000; border: 1px solid #777; }

.doc { flex: 1; min-width: 0; display: flex; flex-direction: column; position: relative; margin: 0 2px; }
.tabs { height: 17px; flex: none; background: linear-gradient(#2a282a, #343234); display: flex; }
.tab { background: #454345; width: 120px; padding-left: 3px; gap: 6px; font: bold 10px "Open Sans", sans-serif; color: #dcdadc; border-right: 1px solid #222; }
.view { flex: 1; min-height: 0; display: grid; grid-template-columns: 15px 1fr 14px; grid-template-rows: 16px 1fr; background: #1f1d1f; }
.origin { width: 15px; height: 16px; }
.hruler { width: 100%; height: 16px; overflow: hidden; border-bottom: 1px solid #8a888a; }
.vruler { width: 15px; height: 100%; overflow: hidden; border-right: 1px solid #8a888a; }
.hruler line, .vruler line { stroke: #a9a7a9; shape-rendering: crispEdges; }
.hruler text, .vruler text { font-size: 9px; fill: #b5b3b5; }
.pointer { stroke-dasharray: 1 1; }
.upcell { display: flex; align-items: center; justify-content: center; background: #2f2d2f; color: #eee; }
.canvas { position: relative; overflow: hidden; background: #575557; }
.page { position: absolute; left: 194px; top: 19px; right: 0; bottom: -40px; background: #fff; border: 1px solid #000; }
.margins { position: absolute; left: 49px; right: 50px; top: 49px; bottom: -10px; border: 1px solid #a87fa8; }
.reversed { position: absolute; left: 101px; top: 95px; margin: 0; width: 210px; height: 37px; padding-left: 13px; background: #000; color: #fff; font: bold 27px/42px "Liberation Sans", sans-serif; white-space: nowrap; }
.frame { position: absolute; left: 113px; top: 105px; width: 536px; height: 375px; border: 1px solid #7f9db3; }
.copy { display: grid; grid-auto-rows: 24px 23px; margin-top: 45px; color: #111; font: 20px/24px "Liberation Serif", serif; }
.line { white-space: pre; }
.line span { padding: 2px 0; }
.yellow { background: #fbf835; }
.pink { background: #d92c85; color: #4b0f30; }
.line .black { background: #000; color: #fff; }
.ibeam { position: absolute; left: 263px; top: 436px; width: 8px; height: 16px; }
.vscroll { background: #302e30; display: flex; flex-direction: column; justify-content: space-between; align-items: center; padding: 48px 1px 2px; color: #eee; border-left: 1px solid #1f1d1f; }
.vscroll i { width: 12px; height: 58%; background: #888688; }
.status { height: 14px; flex: none; display: flex; align-items: center; background: #413f41; font-size: 9px; border-bottom: 1px solid #222; padding-right: 2px; }
.pagenav { display: flex; align-items: center; padding-left: 15px; gap: 5px; width: 218px; }
.pagenav .share { margin: 0 3px; }
.pagenav input { flex: 1; width: 20px; font-size: 9px; font-weight: bold; }
.profile { width: 104px; justify-content: space-between; margin-left: 9px; font-size: 9px; padding-right: 3px; }
.profile svg, .errors svg { margin-left: auto; }
.errors { width: 77px; margin-left: 4px; justify-content: flex-start; gap: 3px; padding-right: 3px; }
.errors i { width: 10px; height: 10px; border-radius: 50%; background: #49b52d; }
.hscroll { flex: 1; display: flex; align-items: center; height: 13px; background: #2b292b; padding: 0 4px; color: #eee; }
.track { flex: 1; height: 11px; display: flex; justify-content: center; }
.track i { width: 40%; margin-right: 7%; background: #858385; }
.spread { width: 16px; height: 12px; margin: 0 4px; }

.floating { position: absolute; background: #434143; border: 1px solid #161416; border-radius: 2px 2px 0 0; box-shadow: 0 1px 5px rgba(0, 0, 0, .4); font-size: 9px; overflow: hidden; }
.character { right: 0; top: 342px; width: 213px; height: 184px; }
.cclose { height: 11px; background: #2c2a2c; padding: 1px 3px; }
.ctitle { display: flex; align-items: center; gap: 2px; height: 16px; padding: 0 3px; font: bold 9px/16px "Open Sans", sans-serif; }
.cfields { display: grid; row-gap: 6px; padding: 7px 5px 4px; width: 60px; border-bottom: 1px solid #333; }
.cicons { display: grid; row-gap: 6px; padding: 5px 4px; }
.charstyles { right: 0; top: 196px; width: 187px; height: 349px; display: flex; flex-direction: column; }
.ptabs { display: flex; align-items: center; height: 18px; background: #2e2c2e; padding-right: 3px; }
.ptab { height: 18px; padding: 0 6px; font: bold 9px "Open Sans", sans-serif; color: #989698; }
.ptab.on { background: #454345; color: #e3e1e3; padding: 0 7px 0 2px; gap: 2px; box-shadow: none; }
.ptabs > svg { margin-left: auto; }
.ptabs > svg:last-child { margin-left: 12px; }
.applied { height: 20px; display: flex; align-items: center; justify-content: space-between; padding: 0 3px 0 2px; }
.listing { flex: 1; display: flex; border-top: 1px solid #333133; }
.listing ul { flex: 1; list-style: none; margin: 0; padding: 0; }
.listing li button { width: 100%; height: 18px; justify-content: space-between; padding: 0 3px 0 28px; border-bottom: 1px solid #333133; font-size: 9px; }
.listing li .on { background: #434d61; color: #fff; font-weight: bold; box-shadow: none; }
.pscroll { width: 11px; background: #353335; color: #777577; display: flex; flex-direction: column; justify-content: space-between; align-items: center; padding: 2px 0; }
.pfoot { height: 17px; display: flex; align-items: center; border-top: 1px solid #2b292b; padding: 0 1px 0 6px; gap: 15px; }
.pfoot > svg:first-child { margin-right: auto; }
.pfoot > svg:last-child { margin-left: -2px; }
.pbase { height: 8px; border-top: 2px solid #2b292b; padding-top: 1px; }

.dock { width: 33px; background: #434143; }
.dock .strip { justify-content: flex-end; padding-right: 3px; }
.dgroup { border-bottom: 1px solid #2a282a; padding: 2px 0 3px; }
.dgroup .grip { margin-bottom: 2px; }
.dgroup button { width: 26px; height: 25px; margin: 0 auto; color: #c4c2c4; }
.watermark { position: absolute; right: 13px; bottom: 11px; height: 36px; display: flex; align-items: center; gap: 6px; color: rgba(190, 186, 190, .25); font: bold 16px "DejaVu Sans", sans-serif; pointer-events: none; }
.watermark svg { width: 40px; height: 36px; }
</style>
